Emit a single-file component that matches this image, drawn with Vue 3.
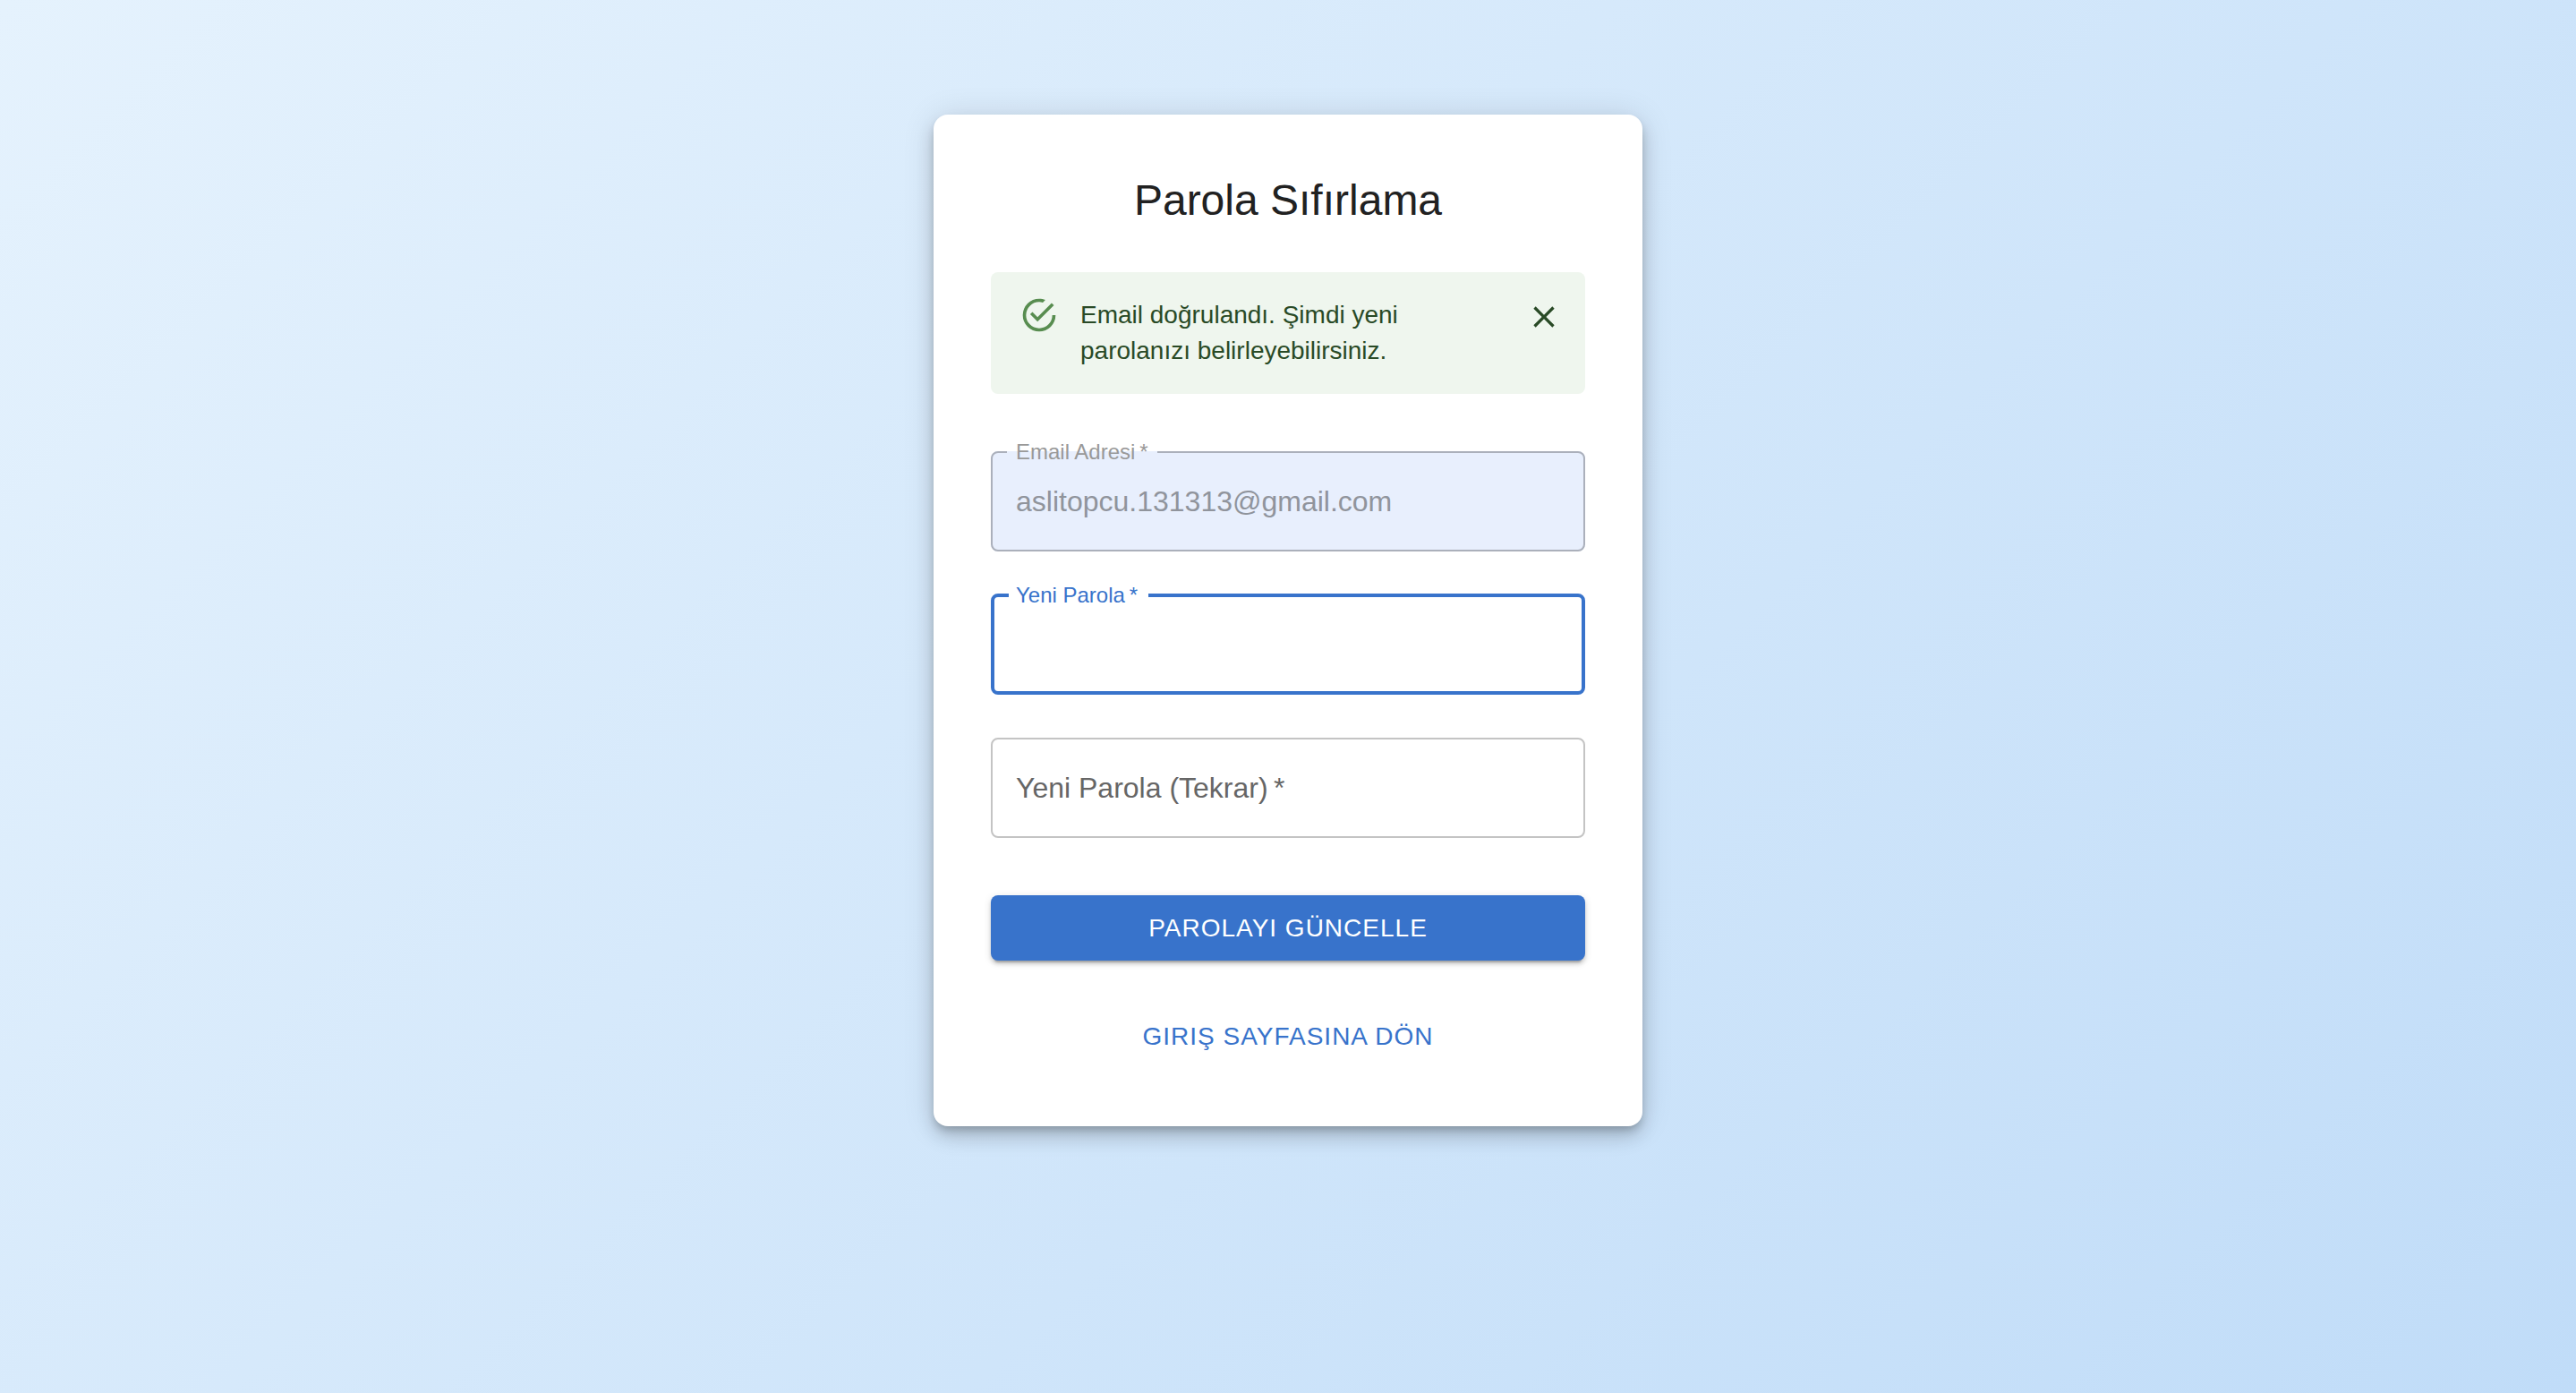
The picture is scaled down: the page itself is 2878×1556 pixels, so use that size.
<script setup>
import { ref } from 'vue'

const email = ref('aslitopcu.131313@gmail.com')
const password = ref('')
const passwordRepeat = ref('')
const alertOpen = ref(true)
</script>

<template>
  <main class="page">
    <section class="card">
      <h1 class="title">Parola Sıfırlama</h1>

      <div v-if="alertOpen" class="alert" role="alert">
        <svg class="alert-icon" viewBox="0 0 24 24" aria-hidden="true">
          <path d="M20,12A8,8 0 0,1 12,20A8,8 0 0,1 4,12A8,8 0 0,1 12,4C12.76,4 13.5,4.11 14.2,4.31L15.77,2.74C14.61,2.26 13.34,2 12,2A10,10 0 0,0 2,12A10,10 0 0,0 12,22A10,10 0 0,0 22,12M7.91,10.08L6.5,11.5L11,16L21,6L19.59,4.58L11,13.17L7.91,10.08Z" />
        </svg>
        <p class="alert-text">Email doğrulandı. Şimdi yeni parolanızı belirleyebilirsiniz.</p>
        <button class="alert-close" type="button" aria-label="Kapat" @click="alertOpen = false">
          <svg viewBox="0 0 24 24" aria-hidden="true">
            <path d="M19 6.41L17.59 5 12 10.59 6.41 5 5 6.41 10.59 12 5 17.59 6.41 19 12 13.41 17.59 19 19 17.59 13.41 12z" />
          </svg>
        </button>
      </div>

      <form class="form" @submit.prevent>
        <fieldset class="field field-disabled">
          <legend><label for="email">Email Adresi&thinsp;*</label></legend>
          <input id="email" v-model="email" type="email" disabled />
        </fieldset>

        <fieldset class="field field-active">
          <legend><label for="password">Yeni Parola&thinsp;*</label></legend>
          <input id="password" v-model="password" type="password" />
        </fieldset>

        <div class="field-resting">
          <label v-show="!passwordRepeat" for="password-repeat">Yeni Parola (Tekrar)&thinsp;*</label>
          <input id="password-repeat" v-model="passwordRepeat" type="password" />
        </div>

        <button class="button submit" type="submit">PAROLAYI GÜNCELLE</button>
        <a class="button" href="#giris">GIRIŞ SAYFASINA DÖN</a>
      </form>
    </section>
  </main>
</template>

<style>
body {
  margin: 0;
}
</style>

<style scoped>
.page {
  box-sizing: border-box;
  display: flex;
  justify-content: center;
  align-items: flex-start;
  min-height: 100vh;
  padding: 128px 32px;
  background: linear-gradient(135deg, #e5f2fd 0%, #c0dcf8 100%);
  font-family: "Liberation Sans", Helvetica, Arial, sans-serif;
}

.card {
  box-sizing: border-box;
  width: 100%;
  max-width: 792px;
  padding: 64px;
  border-radius: 16px;
  background: #fff;
  box-shadow:
    0 6px 10px -2px rgba(0, 0, 0, 0.2),
    0 12px 20px 0 rgba(0, 0, 0, 0.14),
    0 2px 36px 0 rgba(0, 0, 0, 0.12);
}

.title {
  margin: 0 0 48px;
  color: #212121;
  font-size: 48px;
  font-weight: 400;
  line-height: 64px;
  text-align: center;
}

.alert {
  display: flex;
  align-items: flex-start;
  margin-bottom: 64px;
  padding: 12px 16px 12px 32px;
  border-radius: 8px;
  background: #eff6ee;
  color: #294a26;
}

.alert-icon {
  flex: none;
  width: 44px;
  height: 44px;
  margin: 14px 24px 0 0;
  fill: #588d50;
}

.alert-text {
  flex: 1;
  margin: 0;
  padding: 16px 0;
  font-size: 28px;
  line-height: 40px;
}

.alert-close {
  flex: none;
  display: flex;
  margin: 8px 0 0 32px;
  padding: 10px;
  border: 0;
  border-radius: 50%;
  background: none;
  color: inherit;
  cursor: pointer;
}

.alert-close svg {
  width: 40px;
  height: 40px;
  fill: currentColor;
}

.form {
  display: flex;
  flex-direction: column;
  gap: 48px;
}

/* Half of the legend rises above the outline, so the box is pulled up by it. */
.field {
  min-width: 0;
  margin: -11px 0 0;
  padding: 0 16px 11px;
  border: 2px solid #c4c4c4;
  border-radius: 8px;
}

.field legend {
  padding: 0 10px;
  font-size: 24px;
  line-height: 24px;
}

.field input {
  box-sizing: border-box;
  display: block;
  width: 100%;
  height: 86px;
  padding: 0 10px;
}

input {
  border: 0;
  outline: 0;
  background: none;
  color: #212121;
  font-family: inherit;
  font-size: 32px;
}

.field-disabled {
  border-color: #abb0bb;
  background: #e8effd;
}

.field-disabled legend {
  color: #999;
}

.field-disabled input {
  color: #90949c;
}

.field-active {
  padding: 0 16px 9px;
  border: 4px solid #3873cb;
}

.field-active legend {
  padding: 0 12px 0 8px;
  color: #3873cb;
}

.field-resting {
  display: grid;
  align-items: center;
  margin-bottom: 16px;
  border: 2px solid #c4c4c4;
  border-radius: 8px;
}

.field-resting label,
.field-resting input {
  grid-area: 1 / 1;
  padding: 0 26px;
}

.field-resting label {
  color: #666;
  font-size: 32px;
  line-height: 46px;
  pointer-events: none;
}

.field-resting input {
  box-sizing: border-box;
  width: 100%;
  height: 108px;
}

.button {
  box-sizing: border-box;
  align-self: center;
  padding: 12px 16px;
  border: 0;
  border-radius: 8px;
  background: none;
  color: #3873cb;
  font-family: inherit;
  font-size: 28px;
  font-weight: 400;
  letter-spacing: 1px;
  line-height: 49px;
  text-align: center;
  text-decoration: none;
  cursor: pointer;
}

.submit {
  align-self: stretch;
  background: #3873cb;
  color: #fff;
  box-shadow:
    0 6px 2px -4px rgba(0, 0, 0, 0.2),
    0 4px 4px 0 rgba(0, 0, 0, 0.14),
    0 2px 10px 0 rgba(0, 0, 0, 0.12);
}
</style>
